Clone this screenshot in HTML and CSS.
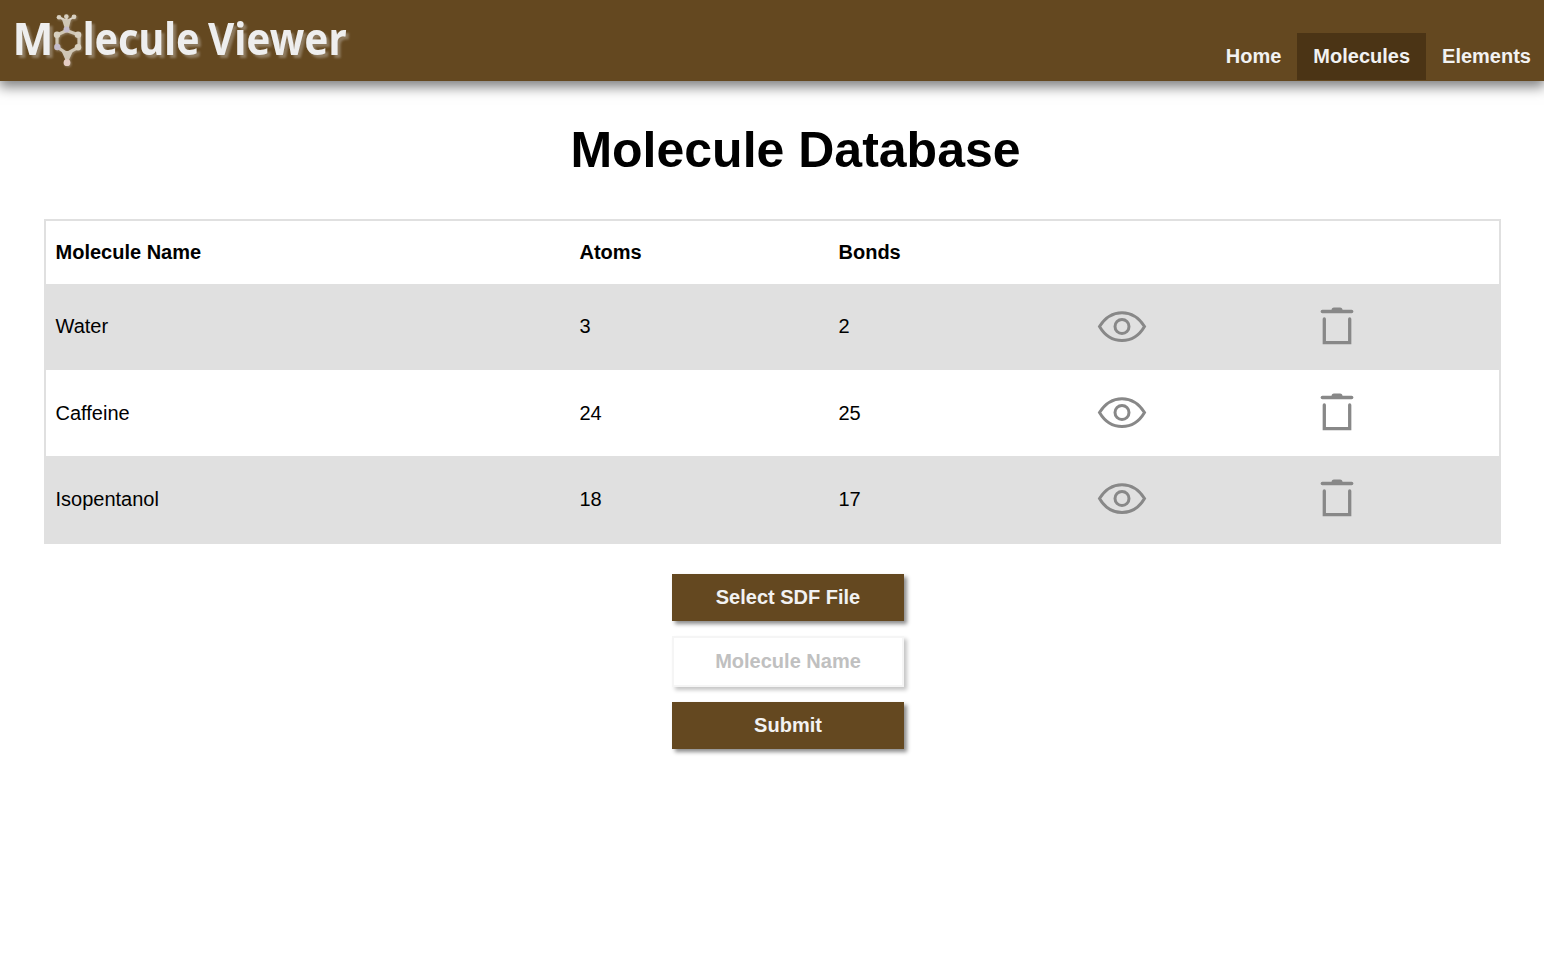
FILE: index.html
```html
<!DOCTYPE html>
<html lang="en">
<head>
<meta charset="utf-8">
<title>Molecule Viewer</title>
<link rel="stylesheet" href="styles.css">
</head>
<body>
<svg class="sprite" aria-hidden="true">
  <symbol id="eye" viewBox="0 0 50 40">
    <path d="M2.500 19.500C7.500 11.500 15 5.700 25 5.700s17.500 5.800 22.500 13.800C42.500 28 35 33.500 25 33.500S7.500 28 2.500 19.500Z"/>
    <circle cx="25" cy="19.500" r="7"/>
  </symbol>
  <symbol id="trash" viewBox="0 0 36 40">
    <path d="M3.300 4.500H32.700" stroke-linecap="round"/>
    <path d="M12.500 3.200Q12.500 .5 15 .5H21Q23.500 .5 23.500 3.200V5H12.500Z" class="fill"/>
    <path d="M5.300 12V35.700H30.700V12" stroke-linecap="round"/>
  </symbol>
</svg>
<header class="bar">
  <svg class="logo" width="360" height="81" viewBox="0 0 360 81" role="img" aria-label="Molecule Viewer">
    <g class="wordmark">
      <text x="12.500" y="55" textLength="41" lengthAdjust="spacingAndGlyphs">M</text>
      <text x="82.700" y="55" textLength="117" lengthAdjust="spacingAndGlyphs">lecule</text>
      <text x="208" y="55" textLength="138.500" lengthAdjust="spacingAndGlyphs">Viewer</text>
    </g>
    <g class="molecule">
      <path class="bonds" d="M67 22V30M66.500 30.500 57 35V47L67 53.500 79 47V35ZM67 53V63"/>
      <path class="arms" d="M59.500 17.500 67 21 74 17M66.500 17V22"/>
      <path class="joint" d="M62 19.500H71L68.500 29H65ZM61.500 51H73L69 60H65.500Z"/>
      <circle cx="59" cy="17.300" r="2.300"/><circle cx="66.300" cy="16.500" r="2.300"/><circle cx="74" cy="16.800" r="2.400"/>
      <circle cx="57" cy="34.700" r="3.200"/><circle cx="78" cy="34.700" r="3.300"/><circle cx="78" cy="47.300" r="3.300"/>
      <circle class="nitrogen" cx="66.500" cy="29.500" r="3"/><circle class="nitrogen" cx="57.300" cy="47" r="3.200"/>
      <circle class="oxygen" cx="67" cy="62.700" r="3.400"/>
    </g>
  </svg>
  <nav class="nav">
    <a class="tab">Home</a>
    <a class="tab active">Molecules</a>
    <a class="tab">Elements</a>
  </nav>
</header>
<main class="content">
  <h1 class="title">Molecule Database</h1>
  <table class="molecules">
    <colgroup><col class="c-name"><col class="c-num"><col class="c-num"><col class="c-view"><col></colgroup>
    <thead>
      <tr><th>Molecule Name</th><th>Atoms</th><th>Bonds</th><th></th><th></th></tr>
    </thead>
    <tbody>
      <tr class="first"><td>Water</td><td>3</td><td>2</td><td><svg class="icon eye"><use href="#eye"/></svg></td><td><svg class="icon trash"><use href="#trash"/></svg></td></tr>
      <tr><td>Caffeine</td><td>24</td><td>25</td><td><svg class="icon eye"><use href="#eye"/></svg></td><td><svg class="icon trash"><use href="#trash"/></svg></td></tr>
      <tr><td>Isopentanol</td><td>18</td><td>17</td><td><svg class="icon eye"><use href="#eye"/></svg></td><td><svg class="icon trash"><use href="#trash"/></svg></td></tr>
    </tbody>
  </table>
  <form class="upload">
    <button type="button" class="btn">Select SDF File</button>
    <input class="name" type="text" placeholder="Molecule Name">
    <button type="button" class="btn">Submit</button>
  </form>
</main>
</body>
</html>
```
FILE: styles.css
```css
* { box-sizing: border-box; }
body {
  margin: 0;
  min-height: 100vh;
  background: #fff;
  color: #000;
  font: 20px/23px "Liberation Sans", Arial, sans-serif;
}
.sprite { position: absolute; width: 0; height: 0; }
.bar {
  display: flex;
  justify-content: space-between;
  align-items: flex-end;
  height: 81px;
  padding-bottom: 1px;
  background: #644820;
  box-shadow: 0 5px 12px 1px rgba(0, 0, 0, .5);
}
.logo { display: block; margin-bottom: -1px; }
.wordmark {
  font: 700 44px "Noto Sans", sans-serif;
  fill: #eee;
  filter: drop-shadow(3px 3px 1px rgba(238, 238, 238, .3));
}
.molecule { fill: #d8d0c0; filter: drop-shadow(1px 1px 1px rgba(238, 238, 238, .3)); }
.bonds { fill: none; stroke: #cfc6b5; stroke-width: 3.200; }
.arms { fill: none; stroke: #ded7ca; stroke-width: 2; }
.joint { fill: #cfc6b5; }
.nitrogen { fill: #c5bccb; }
.oxygen { fill: #e6cdc4; }
.nav { display: flex; }
.tab {
  height: 47px;
  padding: 12px 16px;
  color: #f2f2f2;
  font-weight: 700;
}
.tab:last-child { padding-right: 13px; }
.active { background: #4b3415; }
.content { padding: 40px 43px 30px 44px; }
.title {
  margin: 0 0 40px 46px;
  font-size: 50px;
  line-height: 58px;
  text-align: center;
}
.molecules {
  width: 1457px;
  table-layout: fixed;
  border: 2px solid #e0e0e0;
  border-spacing: 0;
}
.c-name { width: 524px; }
.c-num { width: 259px; }
.c-view { width: 222px; }
th, td { padding: 0 9.500px; text-align: left; vertical-align: middle; }
th { height: 63px; }
td { height: 86px; }
.first td:nth-child(-n+3) { padding-bottom: 2px; }
tbody tr:nth-child(odd) { background: #e0e0e0; }
.icon { display: block; height: 40px; fill: none; stroke: #888; stroke-width: 3; }
.eye { width: 50px; margin-left: -.5px; }
.trash { width: 36px; margin-left: -.5px; stroke-width: 3.300; }
.fill { fill: #888; stroke: none; }
.upload {
  display: flex;
  flex-direction: column;
  gap: 15px;
  width: 232px;
  margin: 30px 0 0 628px;
}
.btn, .name {
  width: 232px;
  height: 47px;
  border: 0;
  padding: 0;
  font: 700 20px/23px "Liberation Sans", Arial, sans-serif;
  text-align: center;
}
.btn { background: #644820; color: #f2f2f2; box-shadow: 3px 3px 4px rgba(0, 0, 0, .45); }
.name {
  height: 51px;
  border: 2px solid #f5f5f5;
  background: #fff;
  box-shadow: 3px 3px 4px rgba(0, 0, 0, .23);
}
.name::placeholder { color: #c0c0c0; opacity: 1; }
```
